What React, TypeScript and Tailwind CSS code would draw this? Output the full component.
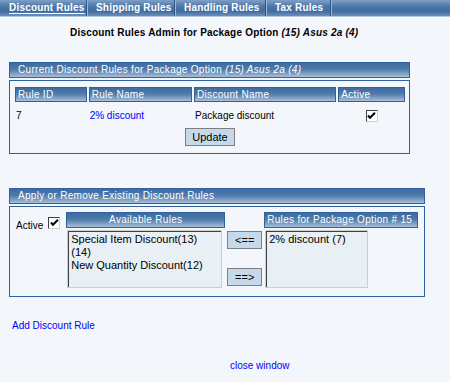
import React from "react";

const font = { fontFamily: '"Liberation Sans", Arial, sans-serif' };

function Check() {
  return (
    <span className="inline-flex h-[12px] w-[12px] items-center justify-center border border-t-[#404040] border-l-[#404040] border-r-[#d4d0c8] border-b-[#d4d0c8] bg-white">
      <svg width="9" height="8" viewBox="0 0 9 8">
        <path d="M1 3.5 L3 5.8 L8 0.8" stroke="#000" strokeWidth="2" fill="none" />
      </svg>
    </span>
  );
}

function Bar({ children, className = "" }: { children: React.ReactNode; className?: string }) {
  return (
    <div
      className={`flex items-center border border-[#30619a] bg-[linear-gradient(to_bottom,#3e6ca0_0%,#4e7aac_45%,#7d9dc3_75%,#a9c0da_100%)] text-[10px] leading-none tracking-[0.3px] text-white ${className}`}
    >
      {children}
    </div>
  );
}

function Btn({ children, className = "" }: { children: React.ReactNode; className?: string }) {
  return (
    <button className={`flex items-center justify-center border border-[#7f7f7f] bg-[#c6d9ea] text-[11px] leading-none text-black ${className}`}>
      {children}
    </button>
  );
}

export default function App() {
  const tabs = [
    { label: "Discount Rules", w: "w-[87px]", active: true },
    { label: "Shipping Rules", w: "w-[88px]" },
    { label: "Handling Rules", w: "w-[91px]" },
    { label: "Tax Rules", w: "w-[65px]" },
  ];

  return (
    <div className="h-[382px] w-[450px] overflow-hidden bg-[#f3f6fa]" style={font}>
      {/* Tabs */}
      <div className="flex h-[17px] border-b border-[#b4c6dc] bg-[linear-gradient(to_bottom,#7f9fc5_0%,#4c78aa_40%,#3f6c9f_70%,#6b8fbb_100%)]">
        {tabs.map((t) => (
          <div
            key={t.label}
            className={`flex h-full items-center border-r border-r-[#2b5889] pl-[9px] text-[10px] font-bold leading-none tracking-[0.2px] text-white shadow-[1px_0_0_#9cb4d0] ${t.w}`}
          >
            <span className={t.active ? "underline underline-offset-2" : ""}>{t.label}</span>
          </div>
        ))}
      </div>

      {/* Title */}
      <div className="mt-[10px] pl-[70px] text-[10px] font-bold leading-[12px] tracking-[0.2px] text-black">
        Discount Rules Admin for Package Option <i>(15) Asus 2a (4)</i>
      </div>

      {/* Current rules */}
      <div className="ml-[9px] mt-[23px] w-[401px]">
        <Bar className="h-[16px] pl-[8px]">
          Current Discount Rules for Package Option&nbsp;<i>(15) Asus 2a (4)</i>
        </Bar>
        <div className="mt-[2px] h-[74px] border border-[#30619a] pl-[5px] pr-[4px] pt-[6px]">
          <div className="flex gap-[2px]">
            <Bar className="h-[15px] w-[72px] pl-[2px]">Rule ID</Bar>
            <Bar className="h-[15px] w-[104px] pl-[2px]">Rule Name</Bar>
            <Bar className="h-[15px] w-[143px] pl-[2px]">Discount Name</Bar>
            <Bar className="h-[15px] w-[67px] pl-[2px]">Active</Bar>
          </div>
          <div className="mt-[7px] flex h-[14px] items-center gap-[2px] text-[10px] leading-none text-black">
            <div className="w-[72px] pl-[1px]">7</div>
            <div className="w-[104px] pl-[1px] text-[#0000ff]">2% discount</div>
            <div className="w-[143px] pl-[1px]">Package discount</div>
            <div className="flex w-[67px] justify-center">
              <Check />
            </div>
          </div>
          <div className="mt-[5px] flex justify-center">
            <Btn className="h-[18px] w-[50px]">Update</Btn>
          </div>
        </div>
      </div>

      {/* Apply / remove */}
      <div className="ml-[9px] mt-[34px] w-[416px]">
        <Bar className="h-[16px] pl-[8px]">Apply or Remove Existing Discount Rules</Bar>
        <div className="mt-[2px] flex h-[91px] border border-[#30619a] pl-[6px] pt-[5px]">
          <div className="mt-[5px] flex h-[12px] items-start gap-[5px] text-[10px] leading-[12px] text-black">
            <span className="mt-[3px]">Active</span>
            <Check />
          </div>
          <div className="ml-[6px] w-[159px]">
            <Bar className="h-[16px] justify-center">Available Rules</Bar>
            <div className="ml-[1px] mt-[2px] h-[58px] w-[155px] border border-[#d0cdc4] bg-[#e8eff5] pl-[3px] pt-[2px] text-[11px] leading-[13px] text-black shadow-[inset_1px_1px_0_#404040]">
              <div>Special Item Discount(13)</div>
              <div>(14)</div>
              <div>New Quantity Discount(12)</div>
            </div>
          </div>
          <div className="ml-[2px] flex w-[35px] flex-col pt-[19px]">
            <Btn className="h-[18px] w-[35px]">&lt;==</Btn>
            <Btn className="mt-[19px] h-[18px] w-[35px]">==&gt;</Btn>
          </div>
          <div className="ml-[2px] w-[154px]">
            <Bar className="h-[16px] pl-[2px]">Rules for Package Option # 15</Bar>
            <div className="ml-[1px] mt-[2px] h-[58px] w-[103px] border border-[#d0cdc4] bg-[#e8eff5] pl-[3px] pt-[2px] text-[11px] leading-[13px] text-black shadow-[inset_1px_1px_0_#404040]">
              2% discount (7)
            </div>
          </div>
        </div>
      </div>

      <div className="ml-[12px] mt-[23px] text-[10px] leading-[12px] text-[#0000ff]">Add Discount Rule</div>
      <div className="mt-[28px] pl-[230px] text-[10px] leading-[12px] text-[#0000ff]">close window</div>
    </div>
  );
}
